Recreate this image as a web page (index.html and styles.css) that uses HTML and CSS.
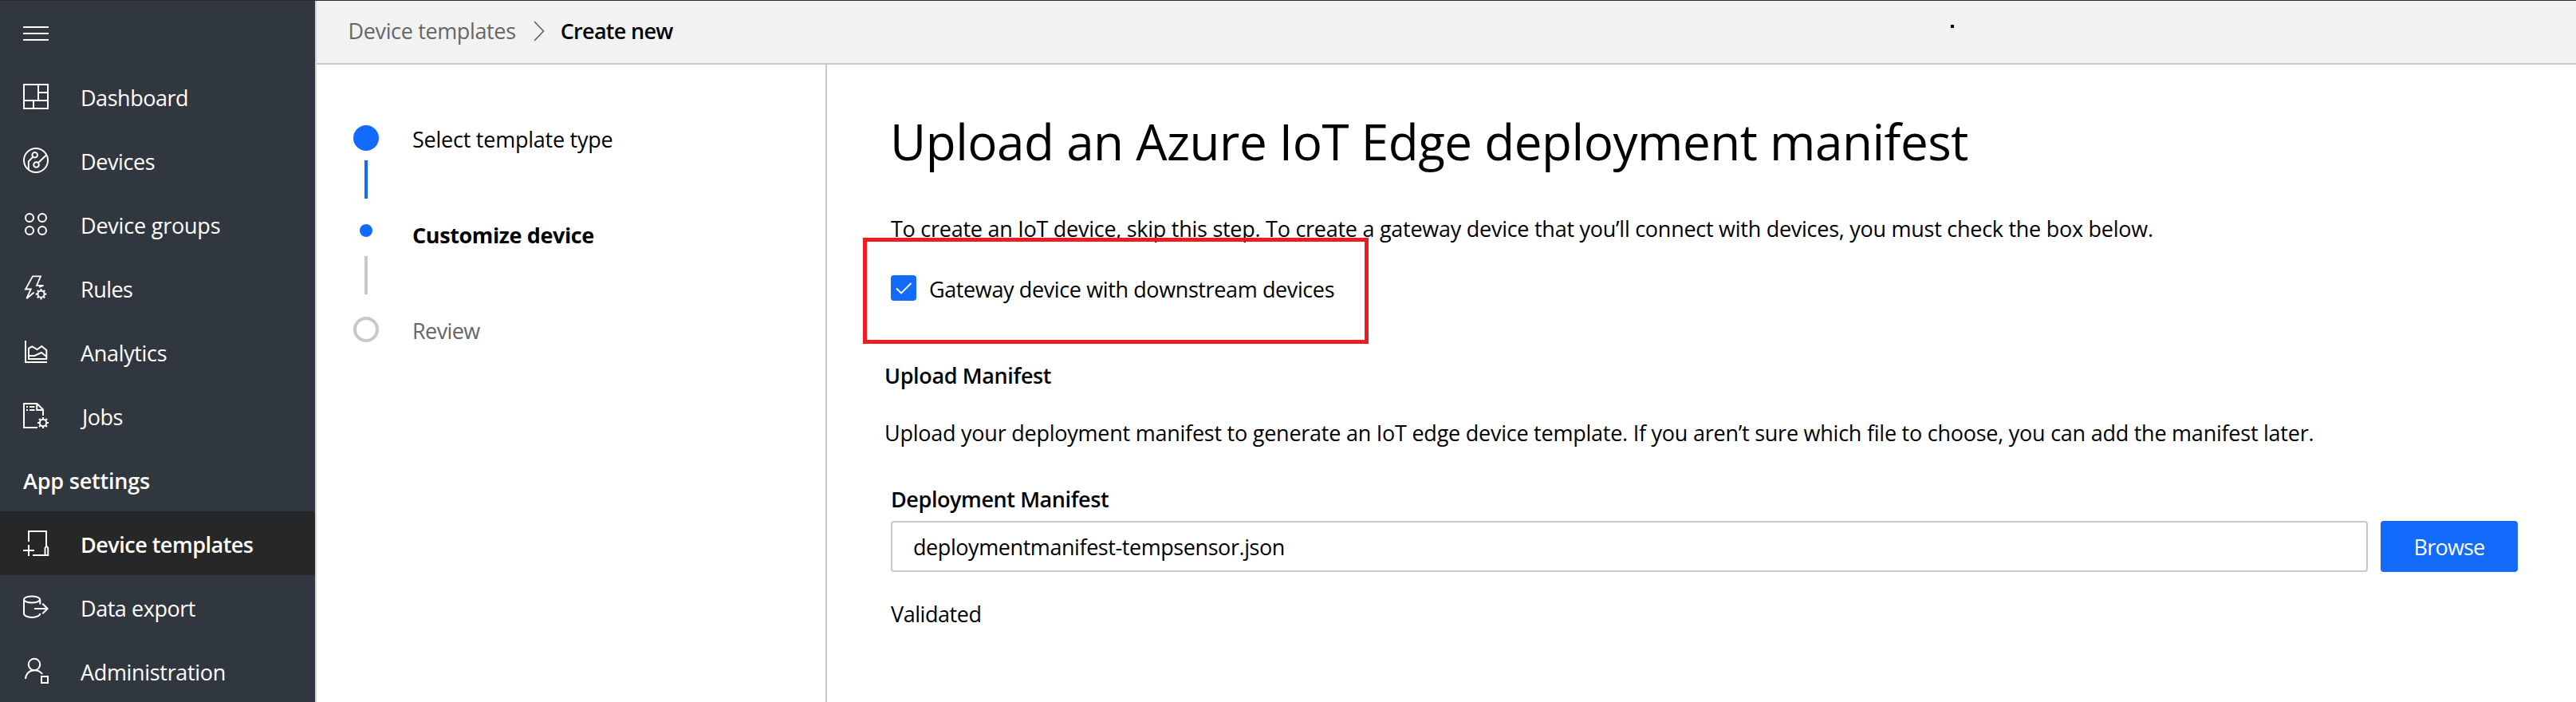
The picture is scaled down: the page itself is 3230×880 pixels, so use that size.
FILE: index.html
```
<!DOCTYPE html>
<html lang="en">
<head>
<meta charset="utf-8">
<title>Create new - Device templates</title>
<link rel="stylesheet" href="styles.css">
</head>
<body>
<div class="app">
  <nav class="sidebar">
    <div class="nav-item">
      <svg class="icon" viewBox="0 0 32 32"><path d="M0 9H32M0 17H32M0 25H32"/></svg>
    </div>
    <a class="nav-item">
      <svg class="icon" viewBox="0 0 32 32"><path d="M1 1H31V31H1ZM19 1V21M19 11H31M1 21H31M13 21V31"/></svg>
      <span class="label t-dashboard">Dashboard</span>
    </a>
    <a class="nav-item">
      <svg class="icon" viewBox="0 0 32 32"><circle cx="16" cy="16" r="15"/><circle cx="14.7" cy="9.3" r="3.3"/><circle cx="16.5" cy="21.5" r="3.3"/><path d="M12.3 11.8L6.8 17.3V27.5M19 19L29.5 9"/></svg>
      <span class="label t-devices">Devices</span>
    </a>
    <a class="nav-item">
      <svg class="icon" viewBox="0 0 32 32"><circle cx="8" cy="8" r="5"/><circle cx="24" cy="8" r="5"/><circle cx="8" cy="24" r="5"/><circle cx="24" cy="24" r="5"/></svg>
      <span class="label t-groups">Device groups</span>
    </a>
    <a class="nav-item">
      <svg class="icon" viewBox="0 0 32 32"><g stroke-width="1.8"><path d="M20 15L25.5 12.8H17L22 1.3H12L3 17.5H9.8L4.3 29.2L13.7 21.5"/><circle cx="22.5" cy="23.7" r="4"/></g><path stroke-width="2.2" d="M22.5 17V19.5M22.5 28V30.4M15.8 23.7H18.3M26.7 23.7H29.2M17.8 19L19.4 20.6M25.6 26.8L27.2 28.4M27.2 19L25.6 20.6M19.4 26.8L17.8 28.4"/></svg>
      <span class="label t-rules">Rules</span>
    </a>
    <a class="nav-item">
      <svg class="icon" viewBox="0 0 32 32"><path d="M3 2V29H30M7 25V11.7L11.3 9.3L17.7 13L23.3 9L29.3 14V25ZM7 21H14.3L23 17L29.3 22"/></svg>
      <span class="label t-analytics">Analytics</span>
    </a>
    <a class="nav-item">
      <svg class="icon" viewBox="0 0 32 32"><path d="M18 31H1V1H17.5L25 8.5V16M17.2 1V9H25M4 5H6M8 5H14.5M4 9H6M8 9H14.5"/><circle cx="25" cy="25" r="4.2"/><path stroke-width="2.2" d="M25 18V20.5M25 29.5V32M18 25H20.5M29.5 25H32M20 20L21.8 21.8M28.2 28.2L30 30M30 20L28.2 21.8M21.8 28.2L20 30"/></svg>
      <span class="label t-jobs">Jobs</span>
    </a>
    <div class="nav-heading">App settings</div>
    <a class="nav-item active">
      <svg class="icon" viewBox="0 0 32 32"><path d="M7 14V1H29V20M7 18V32M0 25H14M12 31H27.5V22L29.3 19.5L31.2 22V31H27.5"/></svg>
      <span class="label t-templates">Device templates</span>
    </a>
    <a class="nav-item">
      <svg class="icon" viewBox="0 0 32 32"><ellipse cx="11" cy="6.5" rx="10" ry="4"/><path d="M1 6.5V24C1 30.5 21 30.5 21.3 24M21.3 6.5V12.5M14 18H30.5M24.3 11.7L30.6 18L24.3 24.3"/></svg>
      <span class="label t-export">Data export</span>
    </a>
    <a class="nav-item">
      <svg class="icon" viewBox="0 0 32 32"><circle cx="14" cy="8" r="7.2"/><path d="M3 26C3.2 19.5 8 15.2 14 15.2C18 15.2 21.8 17 24.2 20M23 23H31V31H23Z"/></svg>
      <span class="label t-admin">Administration</span>
    </a>
  </nav>

  <div class="page">
    <header class="breadcrumb">
      <span class="crumb">Device templates</span>
      <svg class="chevron" viewBox="0 0 14 26"><path d="M1 1L12.5 13L1 25"/></svg>
      <span class="crumb current">Create new</span>
      <i class="speck"></i>
    </header>

    <div class="content">
      <aside class="stepper">
        <div class="rail">
          <i class="mark done"></i>
          <i class="bar filled"></i>
          <i class="mark now"></i>
          <i class="bar"></i>
          <i class="mark todo"></i>
        </div>
        <div class="steps">
          <div class="step t-select">Select template type</div>
          <div class="step here">Customize device</div>
          <div class="step later">Review</div>
        </div>
      </aside>

      <main class="form">
        <h1 class="title">Upload an Azure IoT Edge deployment manifest</h1>
        <p class="intro">To create an IoT device, skip this step. To create a gateway device that you’ll connect with devices, you must check the box below.</p>
        <div class="gateway">
          <span class="checkbox"><svg viewBox="0 0 32 32"><path d="M7 16.5L13 22.5L25.5 10"/></svg></span>
          <span>Gateway device with downstream devices</span>
        </div>
        <h2 class="section-title">Upload Manifest</h2>
        <p class="help">Upload your deployment manifest to generate an IoT edge device template. If you aren’t sure which file to choose, you can add the manifest later.</p>
        <h3 class="field-title">Deployment Manifest</h3>
        <div class="field">
          <div class="file-name">deploymentmanifest-tempsensor.json</div>
          <button class="browse">Browse</button>
        </div>
        <p class="status">Validated</p>
        <div class="callout"></div>
      </main>
    </div>
  </div>
</div>
</body>
</html>
```
FILE: styles.css
```
* { box-sizing: border-box; }

body {
  margin: 0;
  height: 880px;
  overflow: hidden;
  background: #fff;
  color: #000;
  font: 27px/40px "Open Sans", "Noto Sans", sans-serif;
  letter-spacing: -0.4px;
  white-space: nowrap;
}

h1, h2, h3, p { margin: 0; }
svg { display: block; fill: none; }

.app {
  display: flex;
  height: 880px;
  border-top: 1px solid #2a2a30;
}

/* Sidebar */
.sidebar {
  width: 397px;
  flex: none;
  overflow: hidden;
  background: #31373f;
  border-right: 2px solid #d2d2d4;
  color: #fff;
}
.nav-item {
  display: flex;
  align-items: center;
  gap: 40px;
  height: 80px;
  padding-left: 29px;
}
.nav-item.active {
  background: #262728;
  font-weight: 600;
}
.icon {
  width: 32px;
  height: 32px;
  flex: none;
  overflow: visible;
  stroke: #fff;
  stroke-width: 2;
}
.label { padding-top: 4px; }
.nav-heading {
  height: 80px;
  padding: 22px 0 0 29px;
  font-weight: 600;
  letter-spacing: -0.2px;
}
.t-dashboard { letter-spacing: -0.47px; }
.t-groups { letter-spacing: -0.21px; }
.t-rules { letter-spacing: -0.53px; }
.t-analytics, .t-admin { letter-spacing: -0.33px; }
.t-jobs { padding-left: 2px; letter-spacing: -0.48px; }
.t-templates { letter-spacing: -0.51px; }
.t-export { letter-spacing: -0.45px; }

/* Breadcrumb */
.page {
  display: flex;
  flex-direction: column;
  flex: 1;
}
.breadcrumb {
  position: relative;
  display: flex;
  align-items: center;
  height: 80px;
  padding: 0 0 2px 39.5px;
  background: #f2f2f2;
  border-bottom: 2px solid #c8c8c8;
}
.crumb {
  color: #666;
  letter-spacing: -0.36px;
}
.crumb.current {
  color: #000;
  font-weight: 600;
  letter-spacing: -0.7px;
}
.chevron {
  width: 14px;
  height: 26px;
  margin: 0 20px 0 22px;
  stroke: #666;
  stroke-width: 1.7;
}
.speck {
  position: absolute;
  left: 2049px;
  top: 30px;
  width: 4px;
  height: 4px;
  background: #000;
}

/* Wizard steps */
.content {
  display: flex;
  flex: 1;
}
.stepper {
  display: flex;
  gap: 42px;
  width: 640px;
  flex: none;
  padding-left: 46px;
  border-right: 2px solid #c8c8c8;
}
.rail {
  display: flex;
  flex-direction: column;
  align-items: center;
  width: 32px;
  padding-top: 76px;
}
.mark { border-radius: 50%; }
.mark.done {
  width: 32px;
  height: 32px;
  background: #136bfb;
}
.mark.now {
  width: 16px;
  height: 16px;
  margin: 20px 0 12px;
  background: #136bfb;
}
.mark.todo {
  width: 32px;
  height: 32px;
  margin-top: 16px;
  border: 4px solid #c8c8c8;
}
.bar {
  width: 4px;
  height: 48px;
  margin: 12px 0;
  background: #c8c8c8;
}
.bar.filled { background: #136bfb; }
.steps {
  display: flex;
  flex-direction: column;
  gap: 80px;
  padding-top: 74px;
}
.t-select { letter-spacing: -0.24px; }
.step.here {
  font-weight: 700;
  letter-spacing: -0.4px;
}
.step.later {
  color: #666;
  letter-spacing: -0.6px;
}

/* Form */
.form {
  position: relative;
  flex: 1;
  padding: 56px 0 0 71px;
}
.title {
  margin-left: 8px;
  font-size: 62px;
  font-weight: 400;
  line-height: 80px;
  letter-spacing: -0.49px;
}
.intro {
  margin: 50px 0 0 9px;
  letter-spacing: -0.265px;
}
.gateway {
  display: flex;
  align-items: flex-start;
  gap: 16px;
  margin: 36px 0 0 9px;
  letter-spacing: -0.386px;
}
.checkbox {
  width: 32px;
  height: 32px;
  margin-top: 2px;
  border-radius: 4px;
  background: #136bfb;
}
.checkbox svg {
  stroke: #fff;
  stroke-width: 1.8;
}
.section-title {
  margin: 68px 0 0 1px;
  font-size: 27px;
  font-weight: 600;
  letter-spacing: -0.37px;
}
.help {
  margin: 32px 0 0 1px;
  letter-spacing: -0.245px;
}
.field-title {
  margin: 43px 0 0 9px;
  font-size: 27px;
  font-weight: 600;
  letter-spacing: -0.42px;
}
.field {
  display: flex;
  gap: 16px;
  width: 2040px;
  margin: 7px 0 0 9px;
}
.file-name {
  flex: 1;
  height: 64px;
  padding: 11px 26px;
  border: 2px solid #c8c8c8;
  border-radius: 4px;
  letter-spacing: -0.43px;
}
.browse {
  width: 172px;
  height: 64px;
  padding: 1px 0 0;
  border: 0;
  border-radius: 4px;
  background: #136bfb;
  color: #fff;
  font: inherit;
  letter-spacing: -0.8px;
}
.status {
  margin: 33px 0 0 9px;
  letter-spacing: -0.44px;
}
.callout {
  position: absolute;
  left: 45px;
  top: 217px;
  width: 634px;
  height: 133px;
  border: 5px solid #ed1c24;
}
```
